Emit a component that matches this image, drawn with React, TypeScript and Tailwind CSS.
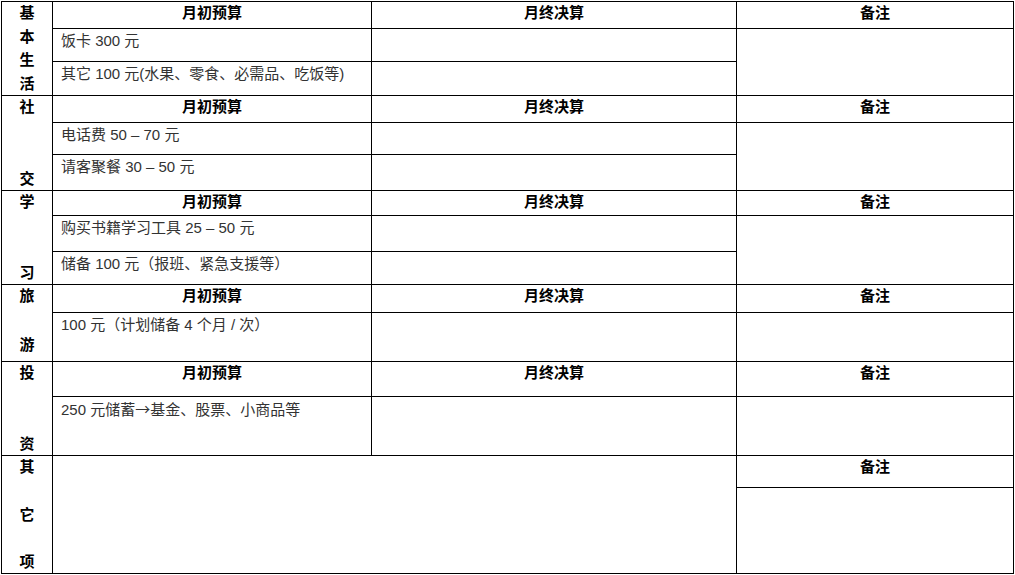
const font = { fontFamily: '"Liberation Sans", "Noto Sans CJK SC", sans-serif' };

type Section = {
  label: string[];
  labelHeight: number;
  labelPad?: string;
  headH: number;
  rows: { text: React.ReactNode; h: number }[];
  mergeNote: boolean;
};

const sections: Section[] = [
  {
    label: ["基", "本", "生", "活"],
    labelHeight: 93,
    headH: 27,
    rows: [
      { text: "饭卡 300 元", h: 33 },
      { text: "其它 100 元(水果、零食、必需品、吃饭等)", h: 34 },
    ],
    mergeNote: true,
  },
  {
    label: ["社", "交"],
    labelHeight: 94,
    headH: 27,
    rows: [
      { text: "电话费 50 – 70 元", h: 32 },
      { text: "请客聚餐 30 – 50 元", h: 36 },
    ],
    mergeNote: true,
  },
  {
    label: ["学", "习"],
    labelHeight: 93,
    headH: 25,
    rows: [
      { text: "购买书籍学习工具 25 – 50 元", h: 36 },
      { text: "储备 100 元（报班、紧急支援等）", h: 33 },
    ],
    mergeNote: true,
  },
  {
    label: ["旅", "游"],
    labelHeight: 76,
    labelPad: "pb-[6px]",
    headH: 28,
    rows: [{ text: "100 元（计划储备 4 个月 / 次）", h: 49 }],
    mergeNote: false,
  },
  {
    label: ["投", "资"],
    labelHeight: 93,
    headH: 35,
    rows: [
      {
        text: (
          <>
            250 元储蓄<span style={{ fontFamily: '"Noto Sans CJK SC", sans-serif' }}>→</span>基金、股票、小商品等
          </>
        ),
        h: 59,
      },
    ],
    mergeNote: false,
  },
];

const cell = "border border-black align-top p-0";
const head = "text-center font-bold text-[15px] leading-[20px] pt-[1px] text-black";
const data = "text-left text-[15px] leading-[20px] pt-[2px] pl-[8px] text-[#333333]";

function Label({ chars, h, pad }: { chars: string[]; h: number; pad?: string }) {
  return (
    <div
      className={`flex flex-col justify-between items-center pt-[1px] pb-[1px] font-bold text-[15px] leading-[20px] text-black ${pad ?? ""}`}
      style={{ height: h }}
    >
      {chars.map((c, i) => (
        <span key={i}>{c}</span>
      ))}
    </div>
  );
}

export default function App() {
  return (
    <div className="w-[1015px] h-[575px] bg-white overflow-hidden pl-[1px] pt-[1px]" style={font}>
      <table className="border-collapse table-fixed w-[1012px]">
        <colgroup>
          <col className="w-[51px]" />
          <col className="w-[319px]" />
          <col className="w-[365px]" />
          <col className="w-[277px]" />
        </colgroup>
        <tbody>
          {sections.map((s, si) => (
            <Rows key={si} s={s} />
          ))}
          <tr className="h-[32px]">
            <td rowSpan={2} className={cell}>
              <Label chars={["其", "它", "项"]} h={117} />
            </td>
            <td rowSpan={2} colSpan={2} className={cell}></td>
            <td className={`${cell} ${head}`}>备注</td>
          </tr>
          <tr className="h-[86px]">
            <td className={cell}></td>
          </tr>
        </tbody>
      </table>
    </div>
  );
}

function Rows({ s }: { s: Section }) {
  const n = s.rows.length + 1;
  return (
    <>
      <tr style={{ height: s.headH }}>
        <td rowSpan={n} className={cell}>
          <Label chars={s.label} h={s.labelHeight} pad={s.labelPad} />
        </td>
        <td className={`${cell} ${head}`}>月初预算</td>
        <td className={`${cell} ${head}`}>月终决算</td>
        <td className={`${cell} ${head}`}>备注</td>
      </tr>
      {s.rows.map((r, i) => (
        <tr key={i} style={{ height: r.h }}>
          <td className={`${cell} ${data}`}>{r.text}</td>
          <td className={cell}></td>
          {s.mergeNote ? (
            i === 0 ? <td rowSpan={s.rows.length} className={cell}></td> : null
          ) : (
            <td className={cell}></td>
          )}
        </tr>
      ))}
    </>
  );
}
